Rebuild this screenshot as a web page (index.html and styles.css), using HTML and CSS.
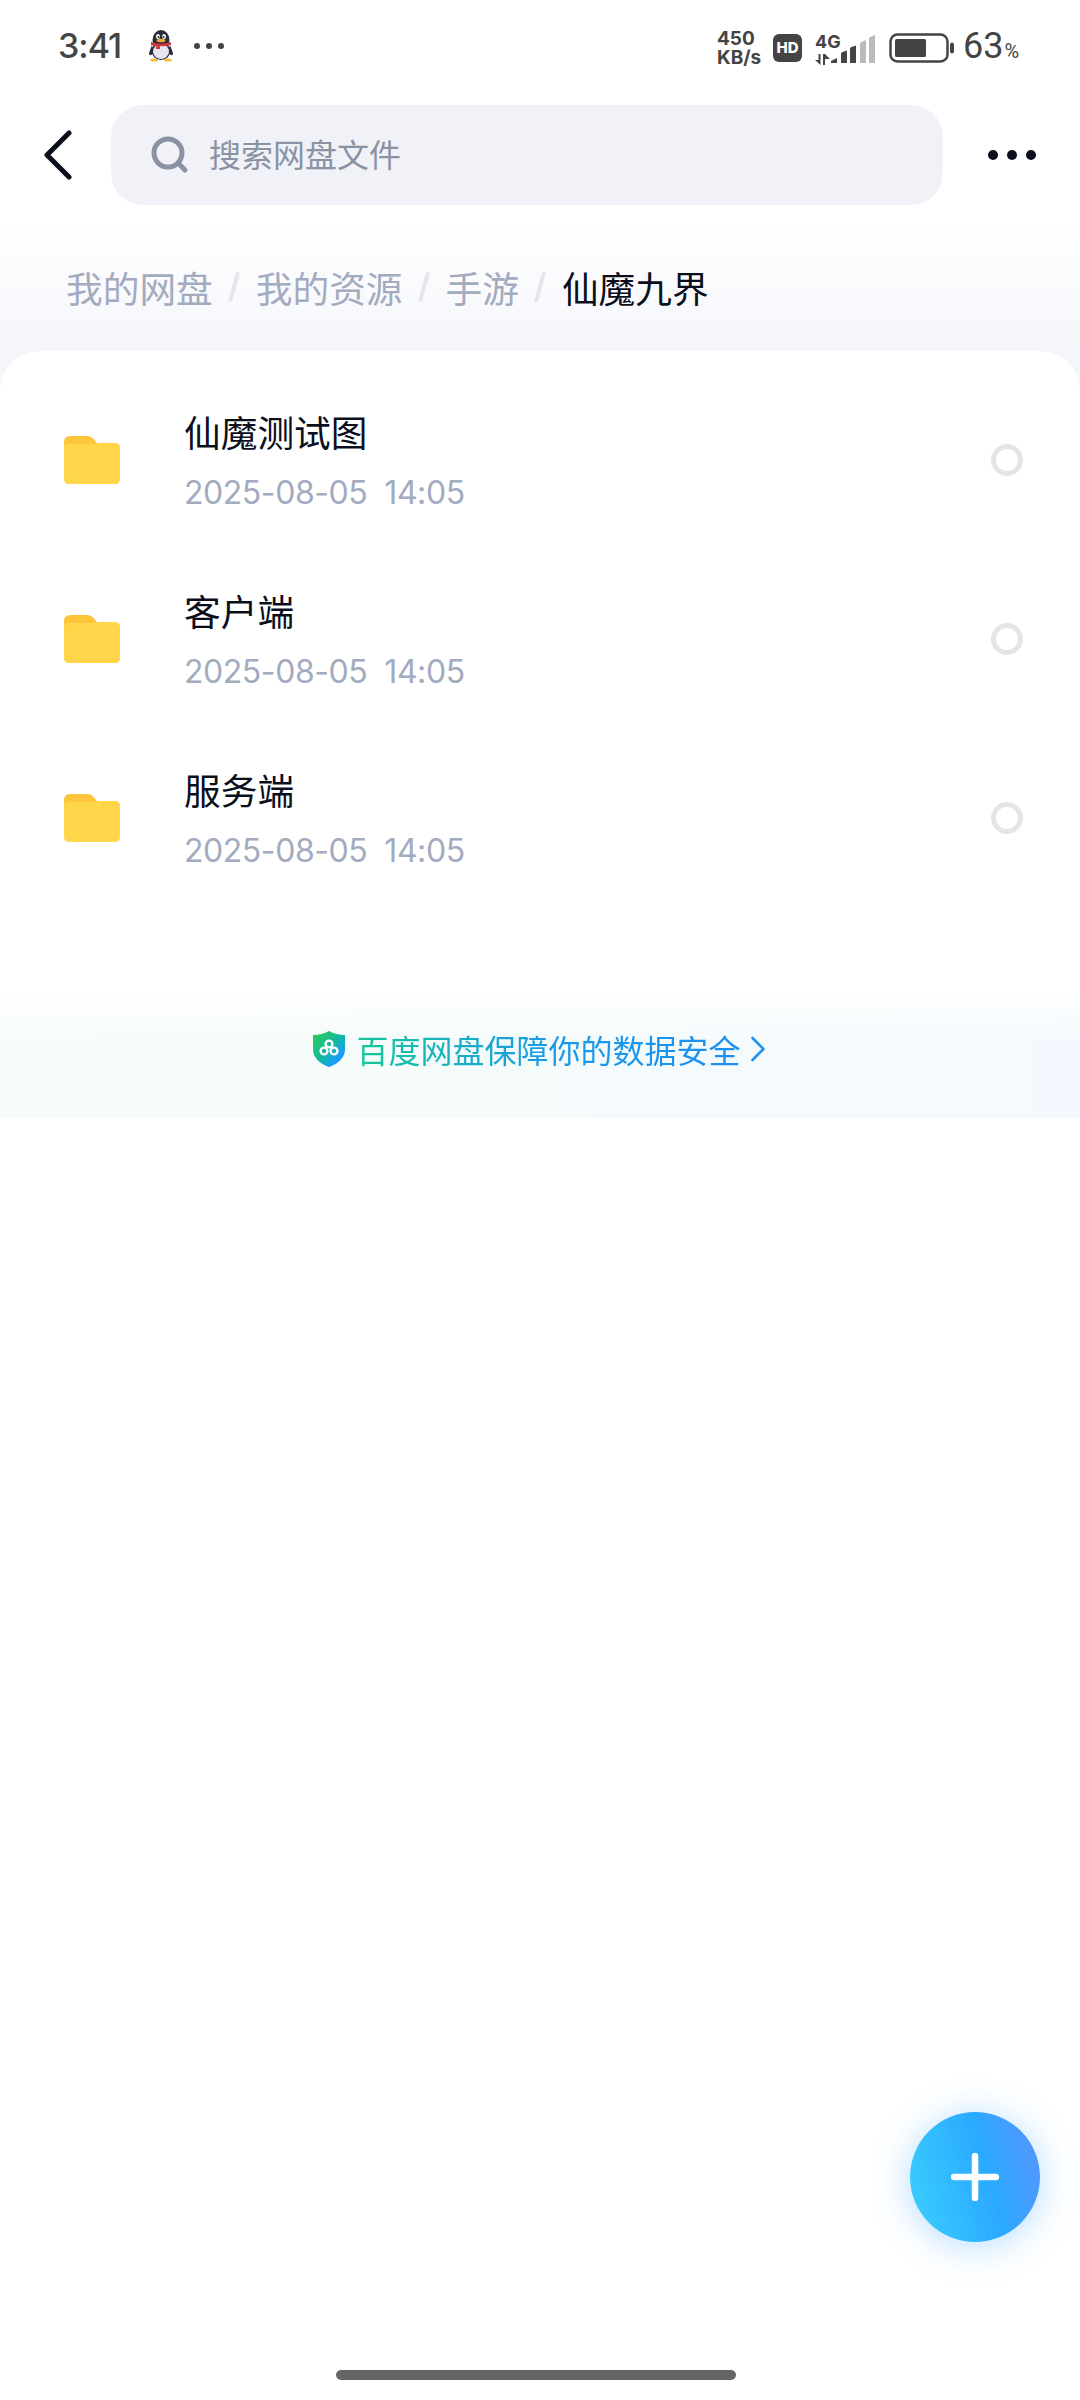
FILE: index.html
```html
<!DOCTYPE html>
<html lang="zh">
<head>
<meta charset="utf-8">
<title>仙魔九界</title>
<link rel="stylesheet" href="styles.css">
</head>
<body>
<div class="page">
  <div class="status">
    <div class="status-left">
      <span class="time">3:41</span>
      <svg class="qq" width="26" height="32" viewBox="0 0 26 32">
        <ellipse cx="6" cy="30" rx="4" ry="1.600" fill="#f5b942"/>
        <ellipse cx="20" cy="30" rx="4" ry="1.600" fill="#f5b942"/>
        <path d="M4 15 L1 23 Q1 26 3 25 L6 23 Z M22 15 L25 23 Q25 26 23 25 L20 23 Z" fill="#2a2d3e"/>
        <ellipse cx="13" cy="10" rx="8.500" ry="10" fill="#2a2d3e"/>
        <ellipse cx="13" cy="21" rx="9.500" ry="9" fill="#2a2d3e"/>
        <ellipse cx="13" cy="21.500" rx="8" ry="7.500" fill="#e6e6f2"/>
        <ellipse cx="10" cy="6.500" rx="2" ry="2.600" fill="#fff"/>
        <ellipse cx="16" cy="6.500" rx="2" ry="2.600" fill="#fff"/>
        <circle cx="10.500" cy="7" r="1" fill="#222"/>
        <circle cx="15.500" cy="7" r="1" fill="#222"/>
        <ellipse cx="13" cy="10.500" rx="4.500" ry="1.800" fill="#f2a92e"/>
        <path d="M3 12 Q13 15.500 23 12 L23 15 Q13 17.500 3 15 Z M8 15 H12 V19 H8 Z" fill="#d1353d"/>
      </svg>
      <span class="sdots"><i></i><i></i><i></i></span>
    </div>
    <div class="status-right">
      <span class="speed"><b>450</b><b>KB/s</b></span>
      <svg class="hd" width="29" height="28" viewBox="0 0 29 28"><rect width="29" height="28" rx="6" fill="#444"/><text x="14.500" y="19" text-anchor="middle" class="hd-text">HD</text></svg>
      <span class="net">
        <span class="net-label">4G</span>
        <svg class="arrows" width="15" height="11" viewBox="0 0 15 11"><path d="M5.500 0V11L0 6H3.500V0ZM8 0V11H10V5H15L10 0Z" fill="#444"/></svg>
      </span>
      <svg class="signal" width="45" height="28" viewBox="0 0 45 28">
        <path d="M0 28 V26 L6 23 V28Z" fill="#444"/>
        <path d="M10 28 V19 Q10 17.500 11.500 17 L16 15.500 V28Z" fill="#444"/>
        <path d="M19 28 V14 Q19 12.500 20.500 12 L25 10.500 V28Z" fill="#444"/>
        <path d="M29 28 V9 Q29 7.500 30.500 7 L35 5 V28Z" fill="#bbb"/>
        <path d="M38 28 V4 Q38 2.500 39.500 2 L44 0 V28Z" fill="#bbb"/>
      </svg>
      <svg class="battery" width="65" height="30" viewBox="0 0 65 30">
        <rect x="1.500" y="1.500" width="57" height="27" rx="7" fill="none" stroke="#444" stroke-width="2.500"/>
        <rect x="6" y="6" width="31" height="18" rx="1.500" fill="#444"/>
        <rect x="61" y="9.500" width="4" height="11" rx="2" fill="#444"/>
      </svg>
      <span class="pct">63<small>%</small></span>
    </div>
  </div>

  <header class="bar">
    <button class="back" aria-label="返回">
      <svg width="30" height="50" viewBox="0 0 30 50"><path d="M26 3 L4 25 L26 47" fill="none" stroke="#0b0f1c" stroke-width="5" stroke-linecap="round" stroke-linejoin="round"/></svg>
    </button>
    <div class="search">
      <svg width="38" height="38" viewBox="0 0 38 38"><circle cx="17" cy="17" r="14" fill="none" stroke="#8a92a3" stroke-width="5"/><path d="M27 27 L34 34" stroke="#8a92a3" stroke-width="5" stroke-linecap="round"/></svg>
      <span class="search-text">搜索网盘文件</span>
    </div>
    <div class="more"><i></i><i></i><i></i></div>
  </header>

  <main class="content">
    <nav class="crumbs">
      <span class="crumb">我的网盘</span><span class="sep"></span>
      <span class="crumb">我的资源</span><span class="sep"></span>
      <span class="crumb">手游</span><span class="sep"></span>
      <span class="crumb current">仙魔九界</span>
    </nav>

    <section class="card">
      <article class="row">
        <svg class="folder" width="56" height="48" viewBox="0 0 56 48"><path d="M6 0H23Q27 0 29.500 3L33 7V14H0V6Q0 0 6 0Z" fill="#ffc53a"/><path d="M0 12Q0 8 5 8H28L33 7H51Q56 7 56 12V43Q56 48 51 48H5Q0 48 0 43Z" fill="#ffd54a"/></svg>
        <div class="info"><div class="name">仙魔测试图</div><div class="date">2025-08-05&nbsp;&nbsp;14:05</div></div>
        <span class="radio"></span>
      </article>
      <article class="row">
        <svg class="folder" width="56" height="48" viewBox="0 0 56 48"><path d="M6 0H23Q27 0 29.500 3L33 7V14H0V6Q0 0 6 0Z" fill="#ffc53a"/><path d="M0 12Q0 8 5 8H28L33 7H51Q56 7 56 12V43Q56 48 51 48H5Q0 48 0 43Z" fill="#ffd54a"/></svg>
        <div class="info"><div class="name">客户端</div><div class="date">2025-08-05&nbsp;&nbsp;14:05</div></div>
        <span class="radio"></span>
      </article>
      <article class="row">
        <svg class="folder" width="56" height="48" viewBox="0 0 56 48"><path d="M6 0H23Q27 0 29.500 3L33 7V14H0V6Q0 0 6 0Z" fill="#ffc53a"/><path d="M0 12Q0 8 5 8H28L33 7H51Q56 7 56 12V43Q56 48 51 48H5Q0 48 0 43Z" fill="#ffd54a"/></svg>
        <div class="info"><div class="name">服务端</div><div class="date">2025-08-05&nbsp;&nbsp;14:05</div></div>
        <span class="radio"></span>
      </article>
    </section>

    <section class="secure">
      <svg width="34" height="38" viewBox="0 0 34 38">
        <defs><linearGradient id="sh" x1="0" y1="0" x2="1" y2="1"><stop offset="0" stop-color="#2fce4f"/><stop offset=".5" stop-color="#12b8a0"/><stop offset=".8" stop-color="#1a9cff"/><stop offset="1" stop-color="#6fc8ff"/></linearGradient></defs>
        <path d="M17 1 Q24 5 33 5 V19 Q33 31 17 37 Q1 31 1 19 V5 Q10 5 17 1Z" fill="url(#sh)"/>
        <g fill="none" stroke="#fff" stroke-width="2.400"><circle cx="17" cy="14" r="3.400"/><circle cx="12" cy="21" r="3.400"/><circle cx="22" cy="21" r="3.400"/></g>
      </svg>
      <span class="secure-text">百度网盘保障你的数据安全</span>
      <svg width="14" height="26" viewBox="0 0 14 26"><path d="M1.500 2 L12.500 13 L1.500 24" fill="none" stroke="#1f93f0" stroke-width="2.600" stroke-linecap="round" stroke-linejoin="round"/></svg>
    </section>
  </main>

  <button class="fab" aria-label="新建">
    <svg width="48" height="48" viewBox="0 0 48 48"><path d="M24 3V45M3 24H45" stroke="#fff" stroke-width="6.500" stroke-linecap="round"/></svg>
  </button>
  <div class="home"></div>
</div>
</body>
</html>
```

FILE: styles.css
```css
* { box-sizing: border-box; }
html, body { margin: 0; padding: 0; background: #fff; }
body { font-family: "Noto Sans CJK SC", Roboto, sans-serif; }
.page { position: relative; width: 1080px; height: 2400px; overflow: hidden; background: #fff; }

.status { height: 105px; padding: 24px 59px 0 58px; display: flex; justify-content: space-between; align-items: flex-start; color: #444; }
.status-left { display: flex; align-items: center; height: 44px; }
.time { font: 500 34px/44px Inter, Roboto, sans-serif; letter-spacing: -1px; width: 90px; }
.qq { margin-right: 20px; }
.sdots { display: flex; gap: 6px; }
.sdots i { width: 6px; height: 6px; border-radius: 50%; background: #444; }

.status-right { display: flex; align-items: center; height: 40px; margin-top: 4px; }
.speed { display: flex; flex-direction: column; font: 700 19px/19px Inter, Roboto, sans-serif; width: 48px; margin-right: 8px; color: #444; white-space: nowrap; }
.speed b { font-weight: 700; }
.hd { margin-right: 13px; }
.hd-text { font: 800 15px Inter, Roboto, sans-serif; fill: #fff; }
.net { display: flex; flex-direction: column; width: 16px; margin-top: 2px; }
.net-label { font: 700 18px/18px Inter, Roboto, sans-serif; color: #444; white-space: nowrap; }
.arrows { margin-top: 3px; }
.signal { margin-right: 13px; margin-top: 2px; }
.battery { margin-right: 9px; }
.pct { width: 58px; font: 400 36px/40px Roboto, sans-serif; color: #444; white-space: nowrap; }
.pct small { font-size: 20px; margin-left: 1px; }

.bar { height: 100px; display: flex; align-items: center; }
.back { width: 111px; height: 100px; border: 0; padding: 0 0 0 43px; background: none; display: flex; align-items: center; }
.search { width: 832px; height: 100px; border-radius: 32px; background: #f0f2f8; display: flex; align-items: center; padding-left: 40px; gap: 20px; color: #8a92a3; font-size: 32px; }
.search-text { margin-top: -4px; }
.more { display: flex; gap: 9px; margin-left: 45px; }
.more i { width: 10px; height: 10px; border-radius: 50%; background: #0b0f1c; }

.content { background: linear-gradient(#fff 15px, #fff 16px, #f5f6fb 146px) no-repeat; background-size: 100% 190px; }
.crumbs { height: 146px; padding: 47px 0 0 66px; display: flex; align-items: flex-start; font-size: 36.7px; line-height: 70px; }
.crumb { color: #a3abbf; white-space: nowrap; }
.crumb.current { color: #0b0f1c; }
.sep { width: 4px; height: 30px; margin: 20px 20px 0 19px; background: #e4e6ec; border-radius: 2px; transform: skewX(-15deg); }

.card { background: #fff; border-radius: 40px 40px 0 0; padding-top: 19px; }
.row { height: 179px; padding: 0 57px 0 64px; display: flex; align-items: center; }
.folder { flex: none; }
.info { flex: 1; margin-left: 64px; }
.name { font-size: 36.7px; line-height: 50px; color: #0b0f1c; }
.date { font: 400 32px/40px Inter, Roboto, sans-serif; color: #a3abbf; margin-top: 17px; letter-spacing: -.45px; }
.radio { width: 32px; height: 32px; border-radius: 50%; border: 5px solid #e5e5e5; flex: none; }

.secure { height: 128px; margin-top: 83px; display: flex; align-items: center; justify-content: center; gap: 10px; padding: 0 3px 11px 0; background: linear-gradient(#fff, rgba(255,255,255,0) 40%), linear-gradient(90deg, #f6fdf8, #f3f9fe); }
.secure-text { font-size: 32px; background: linear-gradient(90deg, #16c79a, #1a9ae8 50%, #1a8ff0); -webkit-background-clip: text; background-clip: text; color: transparent; }

.fab { position: absolute; left: 910px; top: 2112px; width: 130px; height: 130px; border: 0; padding: 0; border-radius: 50%; display: flex; align-items: center; justify-content: center; background: linear-gradient(75deg, #3bd0fe, #2ba8ff 60%, #5d93fd); box-shadow: 0 4px 36px rgba(60,165,255,.38); }
.home { position: absolute; left: 336px; top: 2370px; width: 400px; height: 10px; border-radius: 5px; background: #666; }
```
